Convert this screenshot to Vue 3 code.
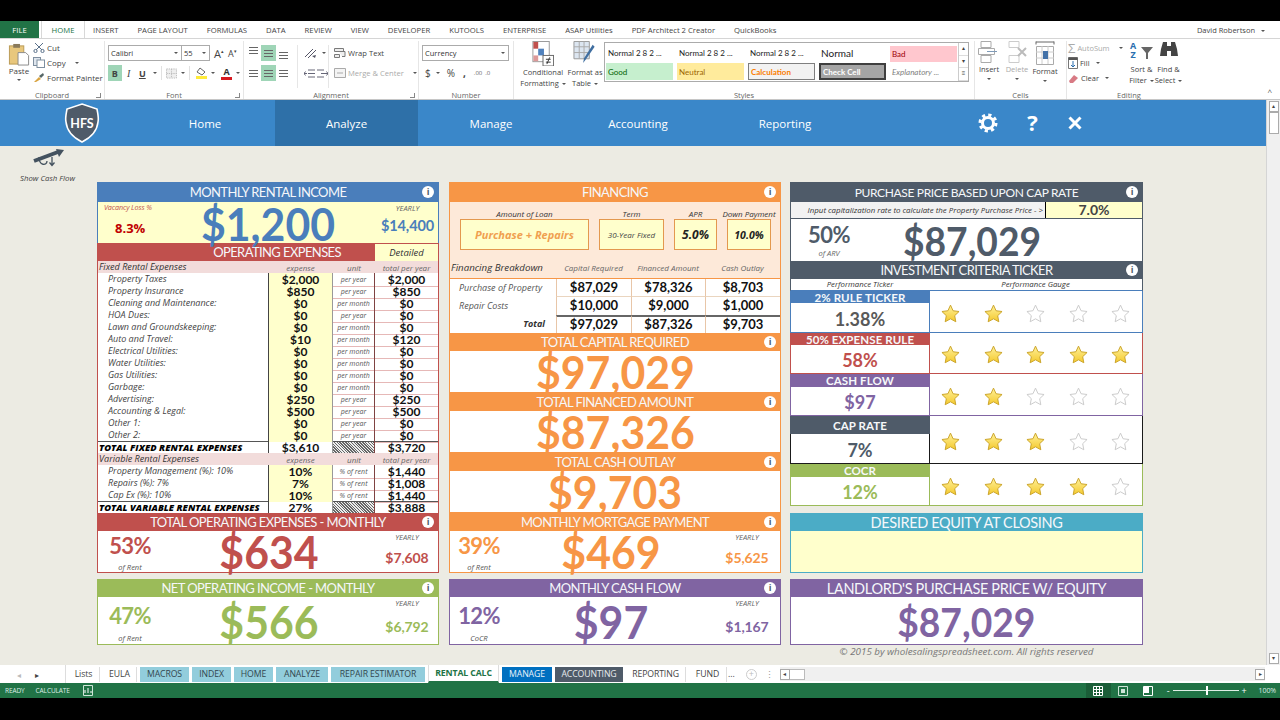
<script setup>
const tabs = ['INSERT','PAGE LAYOUT','FORMULAS','DATA','REVIEW','VIEW','DEVELOPER','KUTOOLS','ENTERPRISE','ASAP Utilities','PDF Architect 2 Creator','QuickBooks']
const navs = [
  { t: 'Home', w: 140 }, { t: 'Analyze', w: 143, active: true }, { t: 'Manage', w: 146 },
  { t: 'Accounting', w: 148 }, { t: 'Reporting', w: 146 }
]
const styleRow1 = [
  { t: 'Normal 2 8 2 ...', c: 'st-plain' }, { t: 'Normal 2 8 2 ...', c: 'st-plain' }, { t: 'Normal 2 8 2 ...', c: 'st-plain' },
  { t: 'Normal', c: 'st-normal' }, { t: 'Bad', c: 'st-bad' }
]
const styleRow2 = [
  { t: 'Good', c: 'st-good' }, { t: 'Neutral', c: 'st-neutral' }, { t: 'Calculation', c: 'st-calc' },
  { t: 'Check Cell', c: 'st-check' }, { t: 'Explanatory ...', c: 'st-expl' }
]
const fixed = [
  ['Property Taxes','$2,000','per year','$2,000'],['Property Insurance','$850','per year','$850'],
  ['Cleaning and Maintenance:','$0','per month','$0'],['HOA Dues:','$0','per year','$0'],
  ['Lawn and Groundskeeping:','$0','per month','$0'],['Auto and Travel:','$10','per month','$120'],
  ['Electrical Utilities:','$0','per month','$0'],['Water Utilities:','$0','per month','$0'],
  ['Gas Utilities:','$0','per month','$0'],['Garbage:','$0','per month','$0'],
  ['Advertising:','$250','per year','$250'],['Accounting & Legal:','$500','per year','$500'],
  ['Other 1:','$0','per year','$0'],['Other 2:','$0','per year','$0']
]
const variable = [
  ['Property Management (%): 10%','10%','% of rent','$1,440'],
  ['Repairs (%): 7%','7%','% of rent','$1,008'],
  ['Cap Ex (%): 10%','10%','% of rent','$1,440']
]
const breakdown = [
  ['Purchase of Property','$87,029','$78,326','$8,703'],
  ['Repair Costs','$10,000','$9,000','$1,000'],
  ['Total','$97,029','$87,326','$9,703']
]
const totals = [
  ['TOTAL CAPITAL REQUIRED','$97,029'],['TOTAL FINANCED AMOUNT','$87,326'],['TOTAL CASH OUTLAY','$9,703']
]
const tickers = [
  { name: '2% RULE TICKER', val: '1.38%', stars: 2, c: 'blue', head: 12, h: 42 },
  { name: '50% EXPENSE RULE', val: '58%', stars: 5, c: 'red', head: 12, h: 41 },
  { name: 'CASH FLOW', val: '$97', stars: 2, c: 'purple', head: 13, h: 42 },
  { name: 'CAP RATE', val: '7%', stars: 3, c: 'dark', head: 18, h: 48 },
  { name: 'COCR', val: '12%', stars: 4, c: 'green', head: 13, h: 42 }
]
const sheetTabs = [
  { t: 'Lists', c: 'plain', w: 32 }, { t: 'EULA', c: 'plain', w: 34 }, { t: 'MACROS', c: 'teal', w: 49 },
  { t: 'INDEX', c: 'teal', w: 39 }, { t: 'HOME', c: 'teal', w: 39 }, { t: 'ANALYZE', c: 'teal', w: 52 },
  { t: 'REPAIR ESTIMATOR', c: 'teal', w: 94 }, { t: 'RENTAL CALC', c: 'cur', w: 71 },
  { t: 'MANAGE', c: 'navy', w: 50 }, { t: 'ACCOUNTING', c: 'slate', w: 68 }, { t: 'REPORTING', c: 'plain', w: 60 },
  { t: 'FUND', c: 'plain', w: 38 }
]
const starPath = 'M10 1.2l2.7 5.9 6.3.8-4.6 4.4 1.2 6.4L10 15.6 4.4 18.7l1.2-6.4L1 7.9l6.3-.8z'
</script>

<template>
  <div class="screen">
    <div class="blackbar top"></div>

    <div class="tabbar">
      <div class="file">FILE</div>
      <div class="hometab">HOME</div>
      <div class="tablist"><span v-for="t in tabs" :key="t">{{ t }}</span></div>
      <div class="user">David Robertson <i class="caret"></i></div>
    </div>

    <div class="ribbon">
      <div class="grp g-clip">
        <div class="grp-body clip">
          <div class="paste">
            <svg width="22" height="23" viewBox="0 0 22 24"><rect x="1" y="3" width="15" height="19" fill="#e8c77d" stroke="#b99a55"/><rect x="5" y="1" width="7" height="4" fill="#8a7a5a"/><path d="M10 10h8l3 3v10H10z" fill="#fff" stroke="#8a8a8a"/></svg>
            <div>Paste</div><i class="caret"></i>
          </div>
          <div class="cliplist">
            <div class="ci"><svg width="12" height="11" viewBox="0 0 12 11"><path d="M2 1l7 7M10 1L3 8" stroke="#59708a" fill="none"/><circle cx="2.5" cy="9" r="1.6" fill="none" stroke="#59708a"/><circle cx="9.5" cy="9" r="1.6" fill="none" stroke="#59708a"/></svg>Cut</div>
            <div class="ci"><svg width="12" height="11" viewBox="0 0 12 11"><rect x=".5" y=".5" width="7" height="8" fill="#dfe6ee" stroke="#7f8fa0"/><rect x="4" y="3" width="7.5" height="7.5" fill="#fff" stroke="#7f8fa0"/></svg>Copy <i class="caret mleft"></i></div>
            <div class="ci"><svg width="12" height="11" viewBox="0 0 12 11"><path d="M1 10l5-5 2 2-5 3z" fill="#d9a441"/><path d="M6 4l4-3 1 2-3 3z" fill="#566"/></svg>Format Painter</div>
          </div>
        </div>
        <div class="grp-label">Clipboard<span class="launch"></span></div>
      </div>

      <div class="grp g-font">
        <div class="grp-body col">
          <div class="rrow">
            <div class="sel w73">Calibri<i class="caret"></i></div>
            <div class="sel w29">55<i class="caret"></i></div>
            <span class="bigA">A<sup>▴</sup></span><span class="smallA">A<sup>▾</sup></span>
          </div>
          <div class="rrow r2">
            <span class="tb on strong">B</span><span class="tb it">I</span><span class="tb ul">U</span><i class="caret"></i>
            <span class="sep"></span>
            <svg width="12" height="11" viewBox="0 0 12 11"><path d="M.5.5h11v10H.5zM6 .5v10M.5 5.5h11" stroke="#bbb" fill="#eee" stroke-dasharray="1.5 1"/></svg><i class="caret"></i>
            <span class="sep"></span>
            <span class="paint"><svg width="12" height="9" viewBox="0 0 12 9"><path d="M5 1l5 4-3 3-5-3z" fill="#fff" stroke="#666"/></svg><b class="swatch yellow"></b></span><i class="caret"></i>
            <span class="paint fc"><span>A</span><b class="swatch redsw"></b></span><i class="caret"></i>
          </div>
        </div>
        <div class="grp-label">Font<span class="launch"></span></div>
      </div>

      <div class="grp g-align">
        <div class="grp-body aligned">
          <div class="agrid">
            <span class="al t"><i></i><i></i><i></i></span><span class="al on"><i></i><i></i><i></i></span><span class="al b"><i></i><i></i><i></i></span>
            <span class="al l"><i></i><i></i><i></i></span><span class="al on c"><i></i><i></i><i></i></span><span class="al r"><i></i><i></i><i></i></span>
          </div>
          <div class="acol">
            <div class="orient"><svg width="14" height="12" viewBox="0 0 14 12"><path d="M1 10L9 2M4 11l8-8" stroke="#556" fill="none"/><path d="M8 9l4-1-1 3z" fill="#556"/></svg><i class="caret"></i></div>
            <div class="indent"><svg width="11" height="9" viewBox="0 0 11 9"><path d="M4 1h7M4 4.5h7M4 8h7M3 4.5H0m1.5-2L0 4.5l1.5 2" stroke="#667" fill="none"/></svg><svg width="11" height="9" viewBox="0 0 11 9"><path d="M0 1h7M0 8h7M4 4.5h7m-1.5-2l1.5 2-1.5 2" stroke="#667" fill="none"/></svg></div>
          </div>
          <div class="wrapcol">
            <div class="wl"><svg width="12" height="12" viewBox="0 0 12 12"><path d="M.5 1.5h9v3h-9zM.5 7.5h5v3h-5zM5 4.5h6v5H8" stroke="#7a7a7a" fill="#eee"/></svg>Wrap Text</div>
            <div class="wl dim"><svg width="12" height="12" viewBox="0 0 12 12"><path d="M.5 1.5h11v9H.5zM3 6h6" stroke="#aaa" fill="#f4f4f4"/></svg>Merge &amp; Center<i class="caret m2"></i></div>
          </div>
        </div>
        <div class="grp-label">Alignment<span class="launch"></span></div>
      </div>

      <div class="grp g-num">
        <div class="grp-body col">
          <div class="rrow"><div class="sel w86">Currency<i class="caret"></i></div></div>
          <div class="rrow r2 numrow"><span>$</span><i class="caret"></i><span>%</span><span class="cm">,</span><span class="dec">.00</span><span class="dec">.0</span></div>
        </div>
        <div class="grp-label">Number</div>
      </div>

      <div class="grp g-styles">
        <div class="grp-body stylebody">
          <div class="bigbtn w50">
            <svg width="22" height="26" viewBox="0 0 22 26"><rect x=".5" y=".5" width="17" height="21" fill="#fff" stroke="#999"/><rect x="1" y="1" width="5" height="7" fill="#c0504d"/><rect x="6" y="8" width="6" height="7" fill="#4f81bd"/><rect x="1" y="15" width="5" height="6" fill="#d99"/><rect x="11" y="15" width="11" height="11" fill="#fff" stroke="#666"/><path d="M14 19h5M14 22h5M18 17l-3 7" stroke="#333" fill="none"/></svg>
            <div>Conditional</div><div>Formatting <i class="caret in"></i></div>
          </div>
          <div class="bigbtn w36">
            <svg width="24" height="26" viewBox="0 0 24 26"><path d="M.5.5h16v18H.5z" fill="#dce6f1" stroke="#999"/><path d="M.5 6h16M.5 12h16M6 .5v18M11 .5v18" stroke="#aaa"/><path d="M22 6l-9 13-3 4 1-5L20 4z" fill="#3f6ea0"/></svg>
            <div>Format as</div><div>Table <i class="caret in"></i></div>
          </div>
          <div class="gallery">
            <div class="gcells">
              <div v-for="(s,i) in styleRow1" :key="'a'+i" class="st" :class="s.c">{{ s.t }}</div>
              <div v-for="(s,i) in styleRow2" :key="'b'+i" class="st" :class="s.c">{{ s.t }}</div>
            </div>
            <div class="gscroll"><i>▴</i><i>▾</i><i>≡</i></div>
          </div>
        </div>
        <div class="grp-label">Styles</div>
      </div>

      <div class="grp g-cells">
        <div class="grp-body cellsb">
          <div class="bigbtn w28"><svg width="22" height="22" viewBox="0 0 22 22"><path d="M3 .5h10v6H3zM3 14.5h10v7H3zM.5 7.5h16v6H.5z" fill="#fff" stroke="#aaa"/><path d="M9 10.5h10" stroke="#7f9bb8"/></svg><div>Insert</div><i class="caret"></i></div>
          <div class="bigbtn w28 dim"><svg width="22" height="22" viewBox="0 0 22 22"><path d="M3 .5h10v6H3zM3 14.5h10v7H3z" fill="#fff" stroke="#ccc"/><path d="M12 7l8 8M20 7l-8 8" stroke="#bbb" stroke-width="2"/></svg><div>Delete</div><i class="caret"></i></div>
          <div class="bigbtn w28"><svg width="20" height="24" viewBox="0 0 20 24"><path d="M1 1h18M1 .5v3M19 .5v3" stroke="#666"/><path d="M1.500 5.500h17v18h-17z" fill="#fff" stroke="#aaa"/><path d="M7 5v18M13 5v18M1 11h18M1 17h18" stroke="#ccc"/><rect x="8" y="10" width="5" height="8" fill="#4472a8"/></svg><div>Format</div><i class="caret"></i></div>
        </div>
        <div class="grp-label">Cells</div>
      </div>

      <div class="grp g-edit">
        <div class="grp-body editb">
          <div class="editlist">
            <div class="el dim"><span class="sigma">Σ</span> AutoSum <i class="caret m2"></i></div>
            <div class="el"><svg width="10" height="12" viewBox="0 0 10 12"><path d="M.5.5h9v11h-9z" fill="#fff" stroke="#777"/><path d="M.5.5h9v2.500h-9z" fill="#555"/><path d="M5 4v6M3 8l2 2 2-2" stroke="#2a6fb0" fill="none"/></svg>Fill<i class="caret"></i></div>
            <div class="el"><svg width="11" height="11" viewBox="0 0 11 11"><path d="M1 8l5-6 4 3-5 5H2z" fill="#d87a84"/></svg>Clear<i class="caret"></i></div>
          </div>
          <div class="bigbtn w27"><svg width="24" height="22" viewBox="0 0 24 22"><path d="M11 6h12l-5 6v6h-2v-6z" fill="#666"/></svg><span class="az">A<br>Z</span><div>Sort &amp;</div><div>Filter <i class="caret in"></i></div></div>
          <div class="bigbtn w27"><svg width="20" height="22" viewBox="0 0 20 22"><path d="M2 8l2-7h4v14H1zM18 8l-2-7h-4v14h7z" fill="#444"/><rect x="8" y="5" width="4" height="5" fill="#444"/></svg><div>Find &amp;</div><div>Select <i class="caret in"></i></div></div>
        </div>
        <div class="grp-label">Editing</div>
      </div>
      <div class="collapse">^</div>
    </div>

    <div class="main">
      <div class="workspace">
        <nav class="nav">
          <div class="logo">
            <svg width="36" height="40" viewBox="0 0 36 40">
              <path d="M18 1l15 5c1 6 2 9 1 13-1 10-8 16-16 20C10 35 3 29 2 19 1 15 2 12 3 6z" fill="#4f5b69" stroke="#fff" stroke-width="1.600"/>
              <text x="18" y="25" text-anchor="middle" class="hfs">HFS</text>
            </svg>
          </div>
          <div v-for="n in navs" :key="n.t" class="navitem" :class="{ active: n.active }" :style="{ width: n.w + 'px' }">{{ n.t }}</div>
          <div class="navicons">
            <svg width="20" height="20" viewBox="0 0 20 20"><circle cx="10" cy="10" r="5.500" fill="none" stroke="#fff" stroke-width="3"/><circle cx="10" cy="10" r="8" fill="none" stroke="#fff" stroke-width="3" stroke-dasharray="3.200 3.080"/></svg>
            <span class="qm">?</span>
            <svg width="16" height="16" viewBox="0 0 16 16"><path d="M2.500 2.500l11 11M13.500 2.500l-11 11" stroke="#fff" stroke-width="3"/></svg>
          </div>
        </nav>

        <div class="sheet">
          <div class="shortcut">
            <svg width="36" height="22" viewBox="0 0 36 22"><path d="M4 13L28 4" stroke="#44525f" stroke-width="4" fill="none"/><path d="M26 1l8 1-5 7z" fill="#44525f"/><path d="M9 9c0 9 8 9 8 4M22 9v8m-2.500-2.500l2.500 3 2.500-3" stroke="#44525f" stroke-width="1.300" fill="none"/></svg>
            <div>Show Cash Flow</div>
          </div>

          <div class="cols">
            <section class="col1">
              <div class="head blue h20"><span>MONTHLY RENTAL INCOME</span><i class="info">i</i></div>
              <div class="incbody">
                <div class="vac"><div class="vacl">Vacancy Loss %</div><div class="vacv">8.3%</div></div>
                <div class="bignum cblue inc">$1,200</div>
                <div class="yr"><div class="yrl">YEARLY</div><div class="yrv cblue">$14,400</div></div>
              </div>
              <div class="opexhead"><span>OPERATING EXPENSES</span><div class="detailed">Detailed</div></div>
              <div class="tbl">
                <div class="tr th"><div class="lab strongi">Fixed Rental Expenses</div><div>expense</div><div>unit</div><div>total per year</div></div>
                <div v-for="r in fixed" :key="r[0]" class="tr"><div class="lab ind">{{ r[0] }}</div><div class="ex">{{ r[1] }}</div><div class="un">{{ r[2] }}</div><div class="to">{{ r[3] }}</div></div>
                <div class="tr sum"><div class="lab total">TOTAL FIXED RENTAL EXPENSES</div><div class="ex plainbg">$3,610</div><div class="hatch"></div><div class="to">$3,720</div></div>
                <div class="tr th"><div class="lab strongi">Variable Rental Expenses</div><div>expense</div><div>unit</div><div>total per year</div></div>
                <div v-for="r in variable" :key="r[0]" class="tr"><div class="lab ind">{{ r[0] }}</div><div class="ex">{{ r[1] }}</div><div class="un">{{ r[2] }}</div><div class="to">{{ r[3] }}</div></div>
                <div class="tr sum"><div class="lab total">TOTAL VARIABLE RENTAL EXPENSES</div><div class="ex plainbg">27%</div><div class="hatch"></div><div class="to">$3,888</div></div>
              </div>
              <div class="head red h18"><span>TOTAL OPERATING EXPENSES - MONTHLY</span><i class="info">i</i></div>
              <div class="mbody bred">
                <div class="pct cred"><b>53%</b><small>of Rent</small></div>
                <div class="bignum cred">$634</div>
                <div class="yr"><div class="yrl">YEARLY</div><div class="yrv cred">$7,608</div></div>
              </div>
              <div class="head green h18 gapt"><span>NET OPERATING INCOME - MONTHLY</span><i class="info">i</i></div>
              <div class="mbody tall bgreen">
                <div class="pct cgreen"><b>47%</b><small>of Rent</small></div>
                <div class="bignum cgreen">$566</div>
                <div class="yr"><div class="yrl">YEARLY</div><div class="yrv cgreen">$6,792</div></div>
              </div>
            </section>

            <section class="col2">
              <div class="head orange h20"><span>FINANCING</span><i class="info">i</i></div>
              <div class="finbody">
                <div class="finbox b1"><label>Amount of Loan</label><div class="box pr">Purchase + Repairs</div></div>
                <div class="finbox b2"><label>Term</label><div class="box tm">30-Year Fixed</div></div>
                <div class="finbox b3"><label>APR</label><div class="box ap">5.0%</div></div>
                <div class="finbox b4"><label>Down Payment</label><div class="box dp">10.0%</div></div>
              </div>
              <div class="bdhead"><div class="bdt">Financing Breakdown</div><div>Capital Required</div><div>Financed Amount</div><div>Cash Outlay</div></div>
              <div class="bdtbl">
                <div v-for="(r,i) in breakdown" :key="r[0]" class="bdr" :class="{ bdtot: i === 2 }">
                  <div class="bdl">{{ r[0] }}</div><div class="bdv">{{ r[1] }}</div><div class="bdv">{{ r[2] }}</div><div class="bdv">{{ r[3] }}</div>
                </div>
              </div>
              <template v-for="t in totals" :key="t[0]">
                <div class="head orange h18"><span>{{ t[0] }}</span><i class="info">i</i></div>
                <div class="mbody bor center"><div class="bignum cor">{{ t[1] }}</div></div>
              </template>
              <div class="head orange h18"><span>MONTHLY MORTGAGE PAYMENT</span><i class="info">i</i></div>
              <div class="mbody bor nar">
                <div class="pct cor"><b>39%</b><small>of Rent</small></div>
                <div class="bignum cor">$469</div>
                <div class="yr"><div class="yrl">YEARLY</div><div class="yrv cor">$5,625</div></div>
              </div>
              <div class="head purple h18 gapt"><span>MONTHLY CASH FLOW</span><i class="info">i</i></div>
              <div class="mbody tall bpu nar">
                <div class="pct cpu"><b>12%</b><small>CoCR</small></div>
                <div class="bignum cpu">$97</div>
                <div class="yr"><div class="yrl">YEARLY</div><div class="yrv cpu">$1,167</div></div>
              </div>
            </section>

            <section class="col3">
              <div class="head dark h20 hsm"><span>PURCHASE PRICE BASED UPON CAP RATE</span><i class="info">i</i></div>
              <div class="caprow"><div class="capl">Input capitalization rate to calculate the Property Purchase Price - &gt;</div><div class="capv">7.0%</div></div>
              <div class="capbody">
                <div class="arv"><b>50%</b><small>of ARV</small></div>
                <div class="bignum cdark md">$87,029</div>
              </div>
              <div class="head dark h18"><span>INVESTMENT CRITERIA TICKER</span><i class="info">i</i></div>
              <div class="tickhead"><div>Performance Ticker</div><div>Performance Gauge</div></div>
              <div v-for="t in tickers" :key="t.name" class="tick" :class="'t-' + t.c" :style="{ height: t.h + 'px' }">
                <div class="tleft">
                  <div class="thd" :style="{ height: t.head + 'px' }">{{ t.name }}</div>
                  <div class="tval">{{ t.val }}</div>
                </div>
                <div class="stars">
                  <svg v-for="n in 5" :key="n" width="19" height="19" viewBox="0 0 20 20">
                    <defs><linearGradient :id="'g' + t.c + n" x1="0" y1="0" x2="0" y2="1"><stop offset="0" stop-color="#fff19a"/><stop offset="1" stop-color="#f4c92d"/></linearGradient></defs>
                    <path :d="starPath" :fill="n <= t.stars ? 'url(#g' + t.c + n + ')' : '#fff'" :stroke="n <= t.stars ? '#c9a227' : '#c9c9c9'" stroke-width="1"/>
                  </svg>
                </div>
              </div>
              <div class="head teal h18 gapt7 hlg"><span>DESIRED EQUITY AT CLOSING</span></div>
              <div class="eqbody"></div>
              <div class="head purple h18 gapt hlg"><span>LANDLORD'S PURCHASE PRICE W/ EQUITY</span></div>
              <div class="mbody tall bpu center"><div class="bignum cpu wide2">$87,029</div></div>
              <div class="copy">© 2015 by wholesalingspreadsheet.com. All rights reserved</div>
            </section>
          </div>
        </div>
      </div>
      <aside class="vscroll"><span class="arr">▴</span><span class="thumb"></span><span class="track"></span><span class="arr">▾</span></aside>
    </div>

    <div class="sheettabs">
      <div class="stnav"><span class="lt">◂</span><span>▸</span></div>
      <div v-for="t in sheetTabs" :key="t.t" class="stab" :class="t.c" :style="{ width: t.w + 'px' }">{{ t.t }}</div>
      <span class="more">...</span>
      <span class="plus">+</span>
      <span class="vdots">⋮</span>
      <div class="hscroll"><span class="harr">◂</span><span class="hthumb"></span><span class="htrack"></span><span class="harr">▸</span></div>
    </div>

    <div class="status">
      <span>READY</span><span class="calc">CALCULATE</span>
      <svg class="macro" width="10" height="11" viewBox="0 0 10 11"><path d="M.5.5h9v10h-9z" fill="none" stroke="#cfe5d8"/><path d="M2 8V5M5 8V3M8 8V6" stroke="#fff"/></svg>
      <div class="sright">
        <span class="vw on"><svg width="10" height="10" viewBox="0 0 10 10"><path d="M.5.5h9v9h-9zM.5 3.500h9M.5 6.500h9M3.500.5v9M6.500.5v9" stroke="#fff" fill="none"/></svg></span>
        <span class="vw"><svg width="10" height="10" viewBox="0 0 10 10"><path d="M.5.5h9v9h-9z" stroke="#cfe5d8" fill="none"/><path d="M3 3h4v4H3z" fill="#cfe5d8"/></svg></span>
        <span class="vw"><svg width="10" height="10" viewBox="0 0 10 10"><path d="M.5.5h9v9h-9z" stroke="#fff" fill="none"/><path d="M1 1h5v6H1z" fill="#fff"/></svg></span>
        <span class="zm">-</span>
        <div class="slider"><i></i></div>
        <span class="zm">+</span>
        <span class="pctz">100%</span>
      </div>
    </div>
    <div class="blackbar bottom"></div>
  </div>
</template>

<style>
html, body { margin: 0; background: #000; }
</style>

<style scoped>
* { box-sizing: border-box; }
.screen { width: 1280px; height: 720px; display: flex; flex-direction: column; overflow: hidden; font-family: "Open Sans", "Liberation Sans", sans-serif; background: #fff; color: #444; }
.blackbar { background: #000; flex: none; }
.top { height: 21px; }
.bottom { height: 22px; }

.tabbar { height: 17px; flex: none; display: flex; align-items: stretch; font-size: 7.7px; background: #fff; }
.file { width: 39px; background: #217346; color: #fff; display: flex; align-items: center; justify-content: center; }
.hometab { width: 44px; margin-left: 2px; color: #217346; border: 1px solid #d8d8d8; border-bottom: 0; border-top: 0; display: flex; align-items: center; justify-content: center; }
.tablist { display: flex; gap: 19px; margin-left: 8px; align-items: center; color: #444; white-space: nowrap; }
.user { margin-left: auto; margin-right: 15px; align-self: center; font-size: 7.5px; }
.caret { display: inline-block; width: 0; height: 0; border-left: 2px solid transparent; border-right: 2px solid transparent; border-top: 2px solid #555; margin-left: 4px; vertical-align: middle; flex: none; }
.caret.mleft { margin-left: 7px; }
.caret.m2 { margin-left: 7px; }
.caret.in { margin-left: 1px; }

.ribbon { height: 62px; flex: none; display: flex; background: #fff; border-top: 1px solid #d5d5d5; border-bottom: 1px solid #c6c6c6; font-size: 8px; padding-top: 2px; position: relative; }
.grp { display: flex; flex-direction: column; border-right: 1px solid #e6e6e6; flex: none; }
.grp-body { flex: 1; display: flex; min-height: 0; }
.grp-label { height: 11px; text-align: center; font-size: 7.5px; color: #666; position: relative; line-height: 14px; }
.launch { position: absolute; right: 3px; top: 5px; width: 5px; height: 5px; border-right: 1px solid #888; border-bottom: 1px solid #888; }
.col { flex-direction: column; padding: 4px 3px 0; }
.g-clip { width: 105px; }
.clip { padding-left: 8px; }
.paste { width: 22px; display: flex; flex-direction: column; align-items: center; font-size: 8px; line-height: 10px; padding-top: 2px; }
.paste .caret { margin: 3px 0 0; }
.cliplist { margin-left: 3px; display: flex; flex-direction: column; gap: 4px; padding-top: 1px; }
.ci { display: flex; align-items: center; gap: 2px; height: 11px; font-size: 8px; white-space: nowrap; }
.g-font { width: 139px; }
.rrow { display: flex; align-items: center; height: 16px; }
.r2 { margin-top: 4px; }
.sel { height: 16px; border: 1px solid #ababab; display: flex; align-items: center; justify-content: space-between; padding: 0 3px 0 2px; font-size: 7.5px; color: #333; }
.w73 { width: 74px; }
.w29 { width: 29px; margin-left: -1px; margin-right: 4px; }
.w86 { width: 87px; }
.bigA { font-size: 11px; margin-right: 4px; }
.smallA { font-size: 9px; }
.bigA sup, .smallA sup { font-size: 5px; }
.tb { width: 15px; height: 16px; display: flex; align-items: center; justify-content: center; font-size: 9px; }
.tb.on { background: #9fd5b7; }
.strong { font-weight: 700; }
.it { font-style: italic; font-family: "Liberation Serif", serif; font-size: 10px; }
.ul { text-decoration: underline; font-weight: 700; }
.sep { width: 1px; height: 14px; background: #e1e1e1; margin: 0 4px; }
.paint { display: flex; flex-direction: column; align-items: center; width: 12px; margin-left: 1px; font-size: 9px; line-height: 10px; font-weight: 700; }
.swatch { display: block; width: 11px; height: 3px; }
.yellow { background: #ffeb3b; }
.redsw { background: #d71920; }
.fc { margin-left: 6px; }
.fc span { color: #333; }
.g-align { width: 175px; }
.aligned { padding: 4px 2px 0; gap: 4px; }
.agrid { display: grid; grid-template-columns: repeat(3, 15px); grid-auto-rows: 16px; gap: 4px 0; width: 45px; }
.al { display: flex; flex-direction: column; gap: 2px; align-items: center; justify-content: center; }
.al i { display: block; width: 9px; height: 1px; background: #666; }
.al.t { justify-content: flex-start; padding-top: 2px; }
.al.b { justify-content: flex-end; padding-bottom: 2px; }
.al.l { align-items: flex-start; padding-left: 3px; }
.al.r { align-items: flex-end; padding-right: 3px; }
.al.on { background: #9fd5b7; }
.acol { width: 32px; padding-left: 6px; border-left: 1px solid #e6e6e6; border-right: 1px solid #e6e6e6; margin-left: 2px; }
.orient { height: 16px; display: flex; align-items: center; }
.indent { height: 16px; margin-top: 4px; display: flex; align-items: center; gap: 2px; }
.wrapcol { display: flex; flex-direction: column; padding-left: 1px; }
.wl { height: 16px; display: flex; align-items: center; gap: 2px; font-size: 7.6px; white-space: nowrap; margin-bottom: 4px; }
.dim { color: #aaa; }
.g-num { width: 95px; }
.numrow { font-size: 10px; gap: 3px; padding-left: 3px; }
.numrow .caret { margin: 0 4px 0 2px; }
.cm { margin: 0 5px; font-weight: 700; }
.dec { font-size: 6px; color: #666; }
.g-styles { width: 461px; }
.stylebody { padding-left: 3px; }
.bigbtn { position: relative; display: flex; flex-direction: column; align-items: center; font-size: 7.5px; line-height: 10.500px; text-align: center; white-space: nowrap; flex: none; }
.bigbtn svg { margin-bottom: 1px; }
.w50 { width: 52px; }
.w36 { width: 32px; }
.w28 { width: 28px; }
.w27 { width: 27px; }
.gallery { margin-left: 3px; margin-top: 1px; width: 365px; height: 40px; border: 1px solid #ababab; display: flex; }
.gcells { flex: 1; display: grid; grid-template-columns: repeat(5, 67px); grid-template-rows: 19px 17px; gap: 1px 4px; padding: 0 0 0 1px; }
.st { font-size: 8px; display: flex; align-items: center; padding-left: 2px; white-space: nowrap; font-family: "Lato", "Liberation Sans", sans-serif; color: #222; }
.st-normal { font-size: 10px; }
.st-bad { background: #ffc7ce; color: #9c0006; margin-top: 3px; }
.st-good { background: #c6efce; color: #006100; }
.st-neutral { background: #ffeb9c; color: #9c6500; }
.st-calc { background: #f2f2f2; color: #fa7d00; border: 1px solid #7f7f7f; font-weight: 700; }
.st-check { background: #a5a5a5; color: #fff; border: 2px solid #3f3f3f; font-weight: 700; }
.st-expl { color: #7f7f7f; font-style: italic; }
.gscroll { width: 10px; display: flex; flex-direction: column; border-left: 1px solid #ccc; margin-left: auto; font-size: 6px; }
.gscroll i { flex: 1; font-style: normal; text-align: center; border-bottom: 1px solid #ddd; line-height: 11px; }
.g-cells { width: 92px; }
.cellsb .caret { margin: 3px 0 0; }
.g-edit { width: 124px; border-right: 0; }
.editb { padding-left: 1px; gap: 0; }
.editlist { width: 60px; display: flex; flex-direction: column; gap: 3px; padding-top: 1px; }
.el { height: 12px; display: flex; align-items: center; gap: 2px; font-size: 7.5px; white-space: nowrap; }
.sigma { font-size: 13px; color: #aaa; line-height: 12px; }
.az { position: absolute; left: 2px; top: 0; font-size: 9px; line-height: 9px; color: #2a6fb0; font-weight: 700; }
.collapse { margin-left: auto; margin-right: 8px; align-self: flex-end; font-size: 8px; color: #555; padding-bottom: 2px; }

.main { height: 565px; flex: none; display: flex; }
.workspace { flex: 1; display: flex; flex-direction: column; min-width: 0; }
.vscroll { width: 14px; background: #f0f0f0; border-left: 1px solid #d5d5d5; display: flex; flex-direction: column; align-items: center; padding: 1px 0; }
.arr { width: 10px; height: 11px; border: 1px solid #ababab; background: #fff; font-size: 6px; line-height: 9px; text-align: center; flex: none; }
.thumb { width: 10px; height: 22px; background: #fff; border: 1px solid #ababab; flex: none; }
.track { flex: 1; }
.nav { height: 46px; flex: none; background: #3a87c9; display: flex; align-items: stretch; color: #fff; }
.logo { width: 135px; padding-left: 64px; display: flex; align-items: center; }
.hfs { font: 700 12.5px "Lato", sans-serif; fill: #fff; }
.navitem { display: flex; align-items: center; justify-content: center; font: 11.500px "Open Sans", sans-serif; }
.navitem.active { background: #2e70a8; }
.navicons { margin-left: 120px; display: flex; align-items: center; gap: 28.5px; }
.qm { font: 700 22px "Open Sans", sans-serif; color: #fff; width: 12px; text-align: center; line-height: 24px; margin-top: -3px; }

.sheet { flex: 1; background: #ecebe3; display: flex; min-height: 0; font-family: "Lato", "Open Sans", sans-serif; }
.shortcut { width: 97px; flex: none; display: flex; flex-direction: column; align-items: center; padding: 2px 2px 0 0; font: italic 7.800px "Open Sans", sans-serif; color: #444; white-space: nowrap; }
.shortcut svg { margin-bottom: 3px; }
.cols { display: flex; padding-top: 36px; align-items: flex-start; }
.col1 { width: 342px; margin-right: 10px; }
.col2 { width: 332px; margin-right: 9px; }
.col3 { width: 353px; }

.head { display: flex; align-items: center; justify-content: center; color: #f5f7fa; position: relative; font-size: 13px; letter-spacing: -0.6px; }
.hsm { font-size: 12px; letter-spacing: -0.35px; }
.hlg { font-size: 14.5px; letter-spacing: -0.35px; }
.h20 { height: 20px; }
.h18 { height: 18px; }
.gapt { margin-top: 6px; }
.gapt7 { margin-top: 7px; }
.blue { background: #4a7ebb; }
.red { background: #c0504d; }
.green { background: #9bbb59; }
.orange { background: #f79646; }
.purple { background: #8064a2; }
.dark { background: #4f5b69; }
.teal { background: #4bacc6; }
.info { position: absolute; right: 5px; top: 50%; transform: translateY(-50%); width: 12px; height: 12px; border-radius: 50%; background: #fff; color: #4f5b69; font: 700 9px/12px "Open Sans", sans-serif; text-align: center; letter-spacing: 0; }
.cblue { color: #4a7ebb; }
.cred { color: #c0504d; }
.cgreen { color: #9bbb59; }
.cor { color: #f79646; }
.cpu { color: #8064a2; }
.cdark { color: #4f5b69; }

.bignum { font-weight: 700; font-size: 46px; line-height: 42px; height: 42px; white-space: nowrap; text-align: center; transform: scaleX(.93); }
.incbody { height: 41px; background: #ffffcc; border: 1px solid #4a7ebb; border-top: 0; border-bottom: 0; display: grid; grid-template-columns: 87px 166px 1fr; }
.vac { padding-left: 6px; white-space: nowrap; }
.vacl { font: italic 7.200px/10px "Open Sans", sans-serif; color: #c0504d; letter-spacing: -0.1px; }
.vacv { font: 700 13px "Open Sans", sans-serif; color: #c00000; margin: 8px 0 0 11px; line-height: 16px; }
.inc { line-height: 43px; height: 41px; }
.yr { text-align: center; }
.yrl { font: italic 7.500px/13px "Open Sans", sans-serif; color: #666; }
.yrv { font-weight: 700; font-size: 14px; line-height: 20px; letter-spacing: -0.1px; }
.incbody .yr { padding-left: 26px; }
.incbody .yrv { font-size: 14.5px; margin-top: 2px; }
.incbody .yrl { line-height: 12px; }
.opexhead { height: 18px; background: #c0504d; color: #f5f7fa; display: flex; align-items: center; font-size: 13px; letter-spacing: -0.6px; }
.opexhead span { width: 244px; text-align: right; flex: none; }
.detailed { margin-left: auto; width: 63px; height: 17px; background: #ffffcc; color: #333; font: italic 9.500px/17px "Open Sans", sans-serif; text-align: center; letter-spacing: 0; margin-right: 1px; }
.tbl { background: #fff; border-left: 1px solid #c0504d; border-right: 1px solid #c0504d; }
.tr { display: grid; grid-template-columns: 170px 65px 42px 63px; height: 12px; }
.tr > div { display: flex; align-items: center; justify-content: center; white-space: nowrap; }
.lab { justify-content: flex-start !important; font: italic 9px/12px "Open Sans", sans-serif; color: #444; }
.ind { padding: 0 0 2px 10px; }
.strongi { color: #333; font-size: 9.100px; padding-left: 1px; background: #f2dcdb; }
.total { font-weight: 800; font-size: 9.300px; color: #000; padding-left: 1px; letter-spacing: .05px; }
.th { background: #f2dcdb; font: italic 8px "Open Sans", sans-serif; color: #666; }
.ex, .to { font: 700 12px/12px "Lato", sans-serif; color: #111; }
.ex { background: #ffffcc; border-left: 1px solid #444; border-bottom: 1px solid #e3d4a8; border-right: 1px solid #999; }
.un { font: italic 7px "Open Sans", sans-serif; color: #555; border-bottom: 1px solid #e6b8b7; border-right: 1px solid #7f4342; }
.to { border-bottom: 1px solid #e6b8b7; }
.sum { border-top: 1px solid #555; }
.sum .ex, .sum .to { height: 11px; }
.plainbg { background: #fff; border-bottom: 0; }
.sum .to { border-bottom: 0; }
.hatch { height: 11px; background: repeating-linear-gradient(45deg, #666 0 1px, #eee 1px 2px); border-right: 1px solid #7f4342; }

.mbody { height: 42px; background: #fff; display: grid; grid-template-columns: 64px 1fr 62px; border: 1px solid; border-top: 0; }
.mbody.tall { height: 48px; }
.mbody.nar { grid-template-columns: 58px 1fr 66px; }
.bred { border-color: #c0504d; }
.bgreen { border-color: #9bbb59; }
.bor { border-color: #f79646; }
.bpu { border-color: #8064a2; }
.center { display: flex; justify-content: center; }
.pct { text-align: center; display: flex; flex-direction: column; }
.pct b { font-size: 22px; line-height: 24px; letter-spacing: -0.6px; padding-top: 3px; }
.tall .pct b { padding-top: 7px; line-height: 24px; }
.pct small { font: italic 7.500px/10px "Open Sans", sans-serif; color: #555; margin-top: auto; padding-bottom: 1px; }
.mbody .yrv { margin-top: 4px; }
.tall .yrv { margin-top: 7px; }
.tall .bignum { height: 46px; line-height: 50px; }
.wide2 { font-size: 40px; line-height: 50px; height: 47px !important; }

.finbody { height: 58px; background: #fde9d9; border: 1px solid #f79646; border-top: 0; border-bottom: 0; display: flex; padding: 6px 0 0 10px; }
.finbox { display: flex; flex-direction: column; align-items: center; white-space: nowrap; }
.finbox label { font: italic 8px/11px "Open Sans", sans-serif; color: #333; }
.box { height: 31px; background: #ffffcc; border: 1px solid #e3984f; display: flex; align-items: center; justify-content: center; }
.b1 { width: 129px; margin-right: 10px; } .b1 .box { width: 129px; }
.b2 { width: 65px; margin-right: 10px; } .b2 .box { width: 65px; }
.b3 { width: 43px; margin-right: 10px; } .b3 .box { width: 43px; }
.b4 { width: 44px; } .b4 .box { width: 44px; }
.pr { font: italic 700 11px "Open Sans", sans-serif; color: #f0a050; }
.tm { font: italic 8px "Open Sans", sans-serif; color: #444; }
.ap { font: italic 700 12px "Open Sans", sans-serif; color: #222; }
.dp { font: italic 700 10.500px "Open Sans", sans-serif; color: #222; }
.bdhead { height: 18px; background: #fde9d9; border: 1px solid #f79646; border-top: 0; border-bottom: 0; display: grid; grid-template-columns: 106px 75px 74px 75px; font: italic 8px/16px "Open Sans", sans-serif; color: #666; text-align: center; white-space: nowrap; }
.bdt { font-size: 9.700px; color: #333; text-align: left; padding-left: 1px; }
.bdtbl { border: 1px solid #f79646; border-bottom: 0; background: #fff; }
.bdr { display: grid; grid-template-columns: 106px 75px 74px 75px; height: 18px; }
.bdl { font: italic 9px/17px "Open Sans", sans-serif; color: #555; padding-left: 9px; white-space: nowrap; }
.bdv { font: 700 13px/17px "Lato", sans-serif; color: #111; text-align: center; border-left: 1px solid #e8c6a8; border-bottom: 1px solid #ead5bf; }
.bdtot .bdl { text-align: right; padding-right: 11px; font-weight: 700; color: #333; }
.bdtot .bdv { border-top: 2px solid #666; border-bottom: 0; line-height: 15px; }
.bdr:nth-child(2) .bdv { border-bottom: 0; }

.caprow { height: 17px; display: flex; border: 1px solid #4f5b69; border-top: 0; }
.capl { flex: 1; background: #f2f2f2; font: italic 7.900px/17px "Open Sans", sans-serif; color: #333; text-align: right; padding-right: 2px; border-right: 1px solid #000; white-space: nowrap; }
.capv { width: 96px; background: #ffffcc; font-weight: 700; font-size: 14px; line-height: 16px; text-align: center; color: #444; }
.capbody { height: 42px; background: #fff; border: 1px solid #4f5b69; border-top: 0; border-bottom: 0; display: flex; }
.arv { width: 76px; text-align: center; display: flex; flex-direction: column; color: #4f5b69; }
.arv b { font-size: 22px; line-height: 26px; padding-top: 3px; letter-spacing: -0.5px; }
.arv small { font: italic 7.500px/11px "Open Sans", sans-serif; color: #666; }
.md { font-size: 40px; line-height: 44px; height: 42px; width: 210px; }
.tickhead { height: 12px; background: #fff; border: 1px solid #4f5b69; border-top: 0; border-bottom: 1px solid #4a7ebb; display: grid; grid-template-columns: 138px 1fr; font: italic 7.800px/11px "Open Sans", sans-serif; color: #333; text-align: center; white-space: nowrap; }
.tick { display: grid; grid-template-columns: 139px 1fr; background: #fff; border: 1px solid var(--c); border-top: 0; }
.t-blue { --c: #4a7ebb; } .t-red { --c: #c0504d; } .t-purple { --c: #8064a2; } .t-dark { --c: #1a1a1a; --h: #4f5b69; } .t-green { --c: #9bbb59; }
.tleft { display: flex; flex-direction: column; border-right: 1px solid var(--c); color: var(--h, var(--c)); }
.thd { background: var(--h, var(--c)); color: #f6f8fa; font-size: 11.500px; font-weight: 700; text-align: center; flex: none; margin: 0 -1px; letter-spacing: .1px; display: flex; align-items: center; justify-content: center; white-space: nowrap; }
.tval { flex: 1; font-weight: 700; font-size: 18px; text-align: center; display: flex; align-items: center; justify-content: center; padding-top: 2px; }
.t-blue .tval { color: #595959; }
.stars { display: flex; align-items: center; justify-content: space-between; padding: 3px 12px 0 11px; }
.eqbody { height: 42px; background: #ffffcc; border: 1px solid #4bacc6; border-top: 0; }
.copy { font: italic 9.800px/14px "Open Sans", sans-serif; color: #777; text-align: center; }

.sheettabs { height: 18px; flex: none; background: #fff; display: flex; align-items: center; font-size: 8.700px; color: #444; }
.stnav { width: 66px; display: flex; gap: 14px; padding-left: 17px; font-size: 8px; height: 100%; align-items: center; border-right: 1px solid #ddd; }
.lt { color: #bbb; }
.stab { height: 15px; display: flex; align-items: center; justify-content: center; white-space: nowrap; margin-right: 1px; letter-spacing: -0.1px; flex: none; margin-left: 2px; }
.stab.plain { border-right: 1px solid #ddd; }
.stab.teal { background: #92cddc; color: #33474f; }
.stab.cur { height: 18px; font-weight: 700; color: #217346; border-bottom: 2px solid #217346; border-left: 1px solid #ddd; border-right: 1px solid #ddd; }
.stab.navy { background: #0070c0; color: #eaf3fa; }
.stab.slate { background: #4f5b69; color: #e8ebee; }
.more { margin-left: 0; }
.plus { margin-left: 11px; width: 11px; height: 11px; border: 1px solid #ccc; border-radius: 50%; color: #bbb; font-size: 9px; line-height: 8px; text-align: center; }
.vdots { margin-left: 8px; color: #999; font-size: 9px; }
.hscroll { margin-left: 6px; flex: 1; height: 14px; background: #f0f0f0; display: flex; align-items: center; margin-right: 15px; }
.harr { width: 10px; height: 11px; border: 1px solid #aaa; background: #fff; font-size: 6px; line-height: 9px; text-align: center; }
.hthumb { width: 15px; height: 11px; background: #fff; border: 1px solid #bbb; border-left: 0; }
.htrack { flex: 1; }

.status { height: 15px; flex: none; background: #217346; color: #dfeee6; font-size: 6.500px; display: flex; align-items: center; padding-left: 5px; letter-spacing: -0.1px; }
.calc { margin-left: 11px; }
.macro { margin-left: 13px; }
.sright { margin-left: auto; display: flex; align-items: center; height: 100%; padding-right: 4px; }
.vw { width: 25px; height: 100%; display: flex; align-items: center; justify-content: center; }
.vw.on { background: #1b5e38; }
.zm { margin-left: 6px; font-size: 9px; color: #fff; }
.slider { width: 66px; height: 1px; background: #dfeee6; margin-left: 3px; position: relative; }
.slider i { position: absolute; left: 33px; top: -4px; width: 2px; height: 9px; background: #fff; }
.zm + .slider + .zm { margin-left: 3px; }
.pctz { margin-left: 12px; font-size: 7px; }
</style>
